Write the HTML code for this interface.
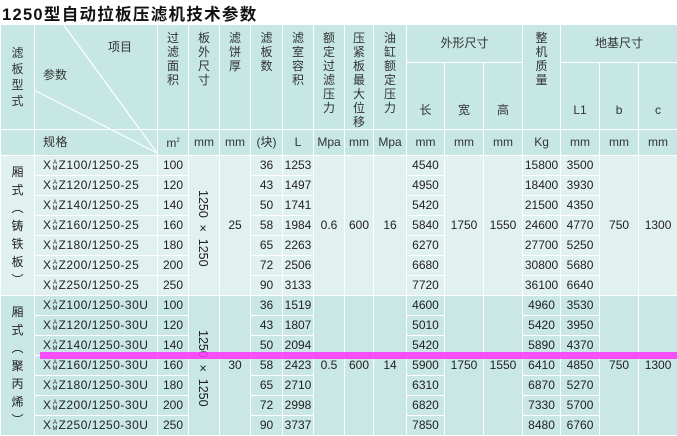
<!DOCTYPE html>
<html><head><meta charset="utf-8"><style>
*{margin:0;padding:0;box-sizing:border-box}
body{width:677px;height:431px;overflow:hidden;background:#fff;font-family:"Liberation Sans","Noto Sans CJK SC",sans-serif;color:#222;position:relative}
.t{position:absolute;left:2px;top:1px;font-size:16.5px;font-weight:bold;letter-spacing:1.3px;color:#111;font-family:"Liberation Sans","Noto Sans CJK SC",sans-serif}
table{position:absolute;left:0;top:24px;border-collapse:collapse;table-layout:fixed;width:677px}
td{border:1.5px solid #fff;text-align:center;vertical-align:middle;font-size:12px;line-height:13px;padding:0;overflow:hidden}
thead td{background:#c6e7e4;color:#333}
tr.b td{height:20px;background:#e1f1ef}
tr.c td{height:20px;background:#c9e7e5}
.sp{text-align:left;padding-left:8px;white-space:nowrap;letter-spacing:0.5px}
sup.s{font-size:6px;position:relative}
.am{display:inline-block;width:7px;font-size:6px;line-height:6px;vertical-align:-1px;text-align:center;letter-spacing:0}
.top{vertical-align:top;padding-top:6px}
.rot{position:absolute;writing-mode:vertical-rl;white-space:nowrap;font-size:12.5px;z-index:2;color:#222}
</style></head><body>
<div class="t">1250型自动拉板压滤机技术参数</div>
<svg style="position:absolute;left:0;top:0;z-index:2" width="677" height="431"><line x1="63" y1="24" x2="157" y2="153" stroke="#fff" stroke-width="1.2"/><line x1="34" y1="90" x2="157" y2="153" stroke="#fff" stroke-width="1.2"/></svg>
<div class="rot" style="left:196px;top:190px">1250 × 1250</div>
<div class="rot" style="left:196px;top:330px">1250 × 1250</div>
<table>
<colgroup><col style="width:34px"><col style="width:123px"><col style="width:31px"><col style="width:31px"><col style="width:31px"><col style="width:32px"><col style="width:31px"><col style="width:31px"><col style="width:29px"><col style="width:33px"><col style="width:38px"><col style="width:39px"><col style="width:39px"><col style="width:38px"><col style="width:39px"><col style="width:39px"><col style="width:39px"></colgroup>
<thead>
<tr style="height:38px"><td rowspan="2" style="font-size:12px;line-height:16px">滤<br>板<br>型<br>式</td>
<td rowspan="2" style="position:relative;text-align:left;vertical-align:top"><div style="position:absolute;left:73px;top:16px;font-size:12px">项目</div><div style="position:absolute;left:8px;top:44px;font-size:12px">参数</div></td>
<td rowspan="2" class="top" style="font-size:12px;line-height:14px">过<br>滤<br>面<br>积</td>
<td rowspan="2" class="top" style="font-size:12px;line-height:14px">板<br>外<br>尺<br>寸</td>
<td rowspan="2" class="top" style="font-size:12px;line-height:14px">滤<br>饼<br>厚</td>
<td rowspan="2" class="top" style="font-size:12px;line-height:14px">滤<br>板<br>数</td>
<td rowspan="2" class="top" style="font-size:12px;line-height:14px">滤<br>室<br>容<br>积</td>
<td rowspan="2" class="top" style="font-size:12px;line-height:14px">额<br>定<br>过<br>滤<br>压<br>力</td>
<td rowspan="2" class="top" style="font-size:12px;line-height:14px">压<br>紧<br>板<br>最<br>大<br>位<br>移</td>
<td rowspan="2" class="top" style="font-size:12px;line-height:14px">油<br>缸<br>额<br>定<br>压<br>力</td>
<td colspan="3" style="font-size:12px">外形尺寸</td>
<td rowspan="2" class="top" style="font-size:12px;line-height:14px">整<br>机<br>质<br>量</td>
<td colspan="3" style="font-size:12px">地基尺寸</td></tr>
<tr style="height:66px"><td style="vertical-align:bottom;padding-bottom:12px">长</td><td style="vertical-align:bottom;padding-bottom:12px">宽</td><td style="vertical-align:bottom;padding-bottom:12px">高</td><td style="vertical-align:bottom;padding-bottom:12px">L1</td><td style="vertical-align:bottom;padding-bottom:12px">b</td><td style="vertical-align:bottom;padding-bottom:12px">c</td></tr>
<tr style="height:26px"><td></td><td class="sp">规格</td><td>m<sup class="s">2</sup></td><td>mm</td><td>mm</td><td>(块)</td><td>L</td><td>Mpa</td><td>mm</td><td>Mpa</td><td>mm</td><td>mm</td><td>mm</td><td>Kg</td><td>mm</td><td>mm</td><td>mm</td></tr>
</thead>
<tbody>
<tr class="b"><td rowspan="7" style="line-height:18px">厢<br>式<br>︵<br>铸<br>铁<br>板<br>︶</td><td class="sp">X<span class="am">A<br>M</span>Z100/1250-25</td><td>100</td><td rowspan="7"></td><td rowspan="7">25</td><td>36</td><td>1253</td><td rowspan="7">0.6</td><td rowspan="7">600</td><td rowspan="7">16</td><td>4540</td><td rowspan="7">1750</td><td rowspan="7">1550</td><td>15800</td><td>3500</td><td rowspan="7">750</td><td rowspan="7">1300</td></tr>
<tr class="b"><td class="sp">X<span class="am">A<br>M</span>Z120/1250-25</td><td>120</td><td>43</td><td>1497</td><td>4950</td><td>18400</td><td>3930</td></tr>
<tr class="b"><td class="sp">X<span class="am">A<br>M</span>Z140/1250-25</td><td>140</td><td>50</td><td>1741</td><td>5420</td><td>21500</td><td>4350</td></tr>
<tr class="b"><td class="sp">X<span class="am">A<br>M</span>Z160/1250-25</td><td>160</td><td>58</td><td>1984</td><td>5840</td><td>24600</td><td>4770</td></tr>
<tr class="b"><td class="sp">X<span class="am">A<br>M</span>Z180/1250-25</td><td>180</td><td>65</td><td>2263</td><td>6270</td><td>27700</td><td>5250</td></tr>
<tr class="b"><td class="sp">X<span class="am">A<br>M</span>Z200/1250-25</td><td>200</td><td>72</td><td>2506</td><td>6680</td><td>30800</td><td>5680</td></tr>
<tr class="b"><td class="sp">X<span class="am">A<br>M</span>Z250/1250-25</td><td>250</td><td>90</td><td>3133</td><td>7720</td><td>36100</td><td>6640</td></tr>
<tr class="c"><td rowspan="7" style="line-height:18px">厢<br>式<br>︵<br>聚<br>丙<br>烯<br>︶</td><td class="sp">X<span class="am">A<br>M</span>Z100/1250-30U</td><td>100</td><td rowspan="7"></td><td rowspan="7">30</td><td>36</td><td>1519</td><td rowspan="7">0.5</td><td rowspan="7">600</td><td rowspan="7">14</td><td>4600</td><td rowspan="7">1750</td><td rowspan="7">1550</td><td>4960</td><td>3530</td><td rowspan="7">750</td><td rowspan="7">1300</td></tr>
<tr class="c"><td class="sp">X<span class="am">A<br>M</span>Z120/1250-30U</td><td>120</td><td>43</td><td>1807</td><td>5010</td><td>5420</td><td>3950</td></tr>
<tr class="c"><td class="sp">X<span class="am">A<br>M</span>Z140/1250-30U</td><td>140</td><td>50</td><td>2094</td><td>5420</td><td>5890</td><td>4370</td></tr>
<tr class="c"><td class="sp">X<span class="am">A<br>M</span>Z160/1250-30U</td><td>160</td><td>58</td><td>2423</td><td>5900</td><td>6410</td><td>4850</td></tr>
<tr class="c"><td class="sp">X<span class="am">A<br>M</span>Z180/1250-30U</td><td>180</td><td>65</td><td>2710</td><td>6310</td><td>6870</td><td>5270</td></tr>
<tr class="c"><td class="sp">X<span class="am">A<br>M</span>Z200/1250-30U</td><td>200</td><td>72</td><td>2998</td><td>6820</td><td>7330</td><td>5700</td></tr>
<tr class="c"><td class="sp">X<span class="am">A<br>M</span>Z250/1250-30U</td><td>250</td><td>90</td><td>3737</td><td>7850</td><td>8480</td><td>6760</td></tr>
</tbody></table>
<div style="position:absolute;left:40px;top:352px;width:637px;height:7px;background:#ff33ff;opacity:.85;z-index:3"></div>
</body></html>
